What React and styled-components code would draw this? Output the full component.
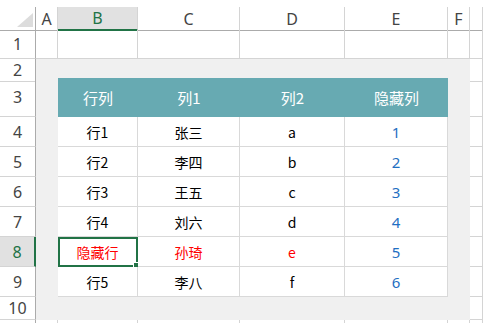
import React from 'react';
import styled, { createGlobalStyle, css } from 'styled-components';

const Global = createGlobalStyle`
  html, body { margin: 0; padding: 0; background: #fff; }
  body { width: 483px; height: 323px; overflow: hidden; }
`;

const COLS = '36px 22px 80px 102px 105px 103px 22px 1fr';
const GRID = '#d4d4d4';
const HDR_LINE = '#ababab';
const GREEN = '#217346';
const SEL_BG = '#e1e1e1';

const Sheet = styled.div`
  padding-top: 7px;
  font-family: "Noto Sans", "Noto Sans CJK SC", sans-serif;
`;

const Row = styled.div`
  display: grid;
  grid-template-columns: ${COLS};
  height: ${p => p.$h}px;
`;

const Corner = styled.div`
  box-sizing: border-box;
  display: flex;
  justify-content: flex-end;
  align-items: flex-end;
  padding: 0 2px 3px 0;
  border-right: 1px solid ${HDR_LINE};
  border-bottom: 1px solid ${HDR_LINE};
`;

const ColHead = styled.div`
  box-sizing: border-box;
  display: flex;
  align-items: center;
  justify-content: center;
  font-size: 16px;
  color: #444;
  border-right: 1px solid ${GRID};
  border-bottom: 1px solid ${HDR_LINE};
  ${p => p.$sel && css`
    background: ${SEL_BG};
    color: ${GREEN};
    border-bottom: 2px solid ${GREEN};
  `}
`;

const RowHead = styled.div`
  box-sizing: border-box;
  display: flex;
  align-items: center;
  justify-content: center;
  font-size: 16px;
  color: #444;
  border-right: 1px solid ${HDR_LINE};
  border-bottom: 1px solid ${GRID};
  ${p => p.$sel && css`
    background: ${SEL_BG};
    color: ${GREEN};
    border-right: 2px solid ${GREEN};
  `}
`;

const Cell = styled.div`
  box-sizing: border-box;
  border-right: 1px solid ${GRID};
  border-bottom: 1px solid ${GRID};
`;

const Fill = styled.div`
  background: #f0f0f0;
`;

const HeadCell = styled.div`
  display: flex;
  align-items: center;
  justify-content: center;
  background: #67aab2;
  color: #fff;
  font-family: "Noto Sans CJK SC", sans-serif;
  font-size: 15px;
`;

const DataCell = styled.div`
  position: relative;
  box-sizing: border-box;
  display: flex;
  align-items: center;
  justify-content: center;
  background: #fff;
  border-right: 1px solid #d9d9d9;
  border-bottom: 1px solid #d9d9d9;
  font-family: ${p => (p.$num ? '"Noto Sans", sans-serif' : '"Noto Sans CJK SC", sans-serif')};
  font-size: ${p => (p.$num ? 15 : 14)}px;
  color: ${p => p.$color};
`;

const Selection = styled.div`
  position: absolute;
  left: 0;
  top: 0;
  right: -1px;
  bottom: -1px;
  border: 2px solid ${GREEN};
  pointer-events: none;
`;

const Handle = styled.div`
  position: absolute;
  right: -4px;
  bottom: -4px;
  width: 5px;
  height: 5px;
  background: ${GREEN};
  border: 1px solid #fff;
`;

const letters = ['A', 'B', 'C', 'D', 'E', 'F', ''];
const header = ['行列', '列1', '列2', '隐藏列'];
const data = [
  ['行1', '张三', 'a', '1'],
  ['行2', '李四', 'b', '2'],
  ['行3', '王五', 'c', '3'],
  ['行4', '刘六', 'd', '4'],
  ['隐藏行', '孙琦', 'e', '5'],
  ['行5', '李八', 'f', '6'],
];

function colorFor(rowIdx, colIdx) {
  if (colIdx === 3) return '#1f6fc2';
  if (rowIdx === 4) return '#ff0000';
  return '#000';
}

export default function App() {
  return (
    <>
      <Global />
      <Sheet>
        <Row $h={23}>
          <Corner>
            <svg width="16" height="14" viewBox="0 0 16 14">
              <polygon points="16,0 16,14 0,14" fill="#dcdcdc" />
            </svg>
          </Corner>
          {letters.map((l, i) => (
            <ColHead key={i} $sel={l === 'B'}>{l}</ColHead>
          ))}
        </Row>

        <Row $h={29}>
          <RowHead>1</RowHead>
          {letters.map((_, i) => <Cell key={i} />)}
        </Row>

        <Row $h={19}>
          <RowHead>2</RowHead>
          {letters.slice(0, 6).map((_, i) => <Fill key={i} />)}
          <Cell />
        </Row>

        <Row $h={39}>
          <RowHead>3</RowHead>
          <Fill />
          {header.map((h, i) => <HeadCell key={i}>{h}</HeadCell>)}
          <Fill />
          <Cell />
        </Row>

        {data.map((r, ri) => (
          <Row $h={30} key={ri}>
            <RowHead $sel={ri === 4}>{ri + 4}</RowHead>
            <Fill />
            {r.map((v, ci) => (
              <DataCell key={ci} $color={colorFor(ri, ci)} $num={ci === 3}>
                {v}
                {ri === 4 && ci === 0 && (
                  <Selection>
                    <Handle />
                  </Selection>
                )}
              </DataCell>
            ))}
            <Fill />
            <Cell />
          </Row>
        ))}

        <Row $h={23}>
          <RowHead>10</RowHead>
          {letters.slice(0, 6).map((_, i) => <Fill key={i} />)}
          <Cell />
        </Row>

        <Row $h={10}>
          <RowHead />
          {letters.map((_, i) => <Cell key={i} />)}
        </Row>
      </Sheet>
    </>
  );
}
